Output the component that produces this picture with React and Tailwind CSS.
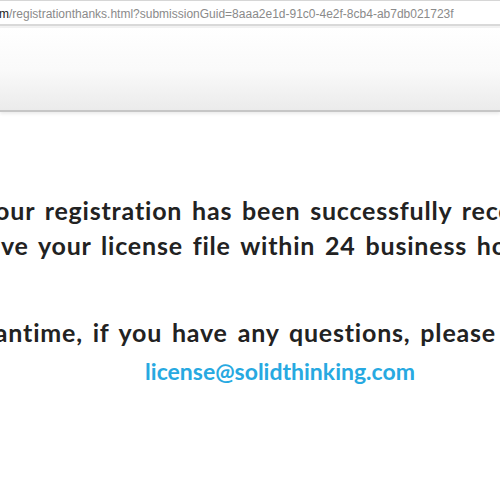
import React from 'react';

const App = () => {
  return (
    <div className="w-[500px] h-[500px] overflow-hidden bg-white">
      {/* browser address strip */}
      <div className="h-[24px] border-t border-[#d6d6d6] flex items-center pt-[3px]">
        <span className="whitespace-nowrap text-[12px] leading-none text-[#8a8a8a] font-['Liberation_Sans',Arial,sans-serif] -ml-[1px]">
          <span className="text-[#1a1a1a]">m</span>/registrationthanks.html?submissionGuid=8aaa2e1d-91c0-4e2f-8cb4-ab7db021723f
        </span>
      </div>
      <div className="h-[4px] border-t-2 border-[#d9d9d9] bg-[#f2f2f2]"></div>

      {/* site header band */}
      <div className="h-[84px] bg-gradient-to-b from-white via-[#fafafa] to-[#ebebeb] border-b-2 border-[#c6c6c6] shadow-[0_2px_3px_rgba(0,0,0,0.08)]"></div>

      {/* message */}
      <div className="w-[560px] flex flex-col items-center pt-[81px] font-['Lato',sans-serif] font-bold text-[#222222] text-[25px] leading-[35px] tracking-[0.8px] [word-spacing:3px] whitespace-nowrap">
        <p className="pr-[10px]">Your registration has been successfully received.</p>
        <p className="pr-[172px]">You will receive your license file within 24 business hours.</p>
        <p className="mt-[52px] pr-[88px]">In the meantime, if you have any questions, please contact</p>
        <a className="text-[#27a9e1] text-[23px] tracking-normal [word-spacing:0px] mt-[4px]">license@solidthinking.com</a>
      </div>
    </div>
  );
};

export default App;
